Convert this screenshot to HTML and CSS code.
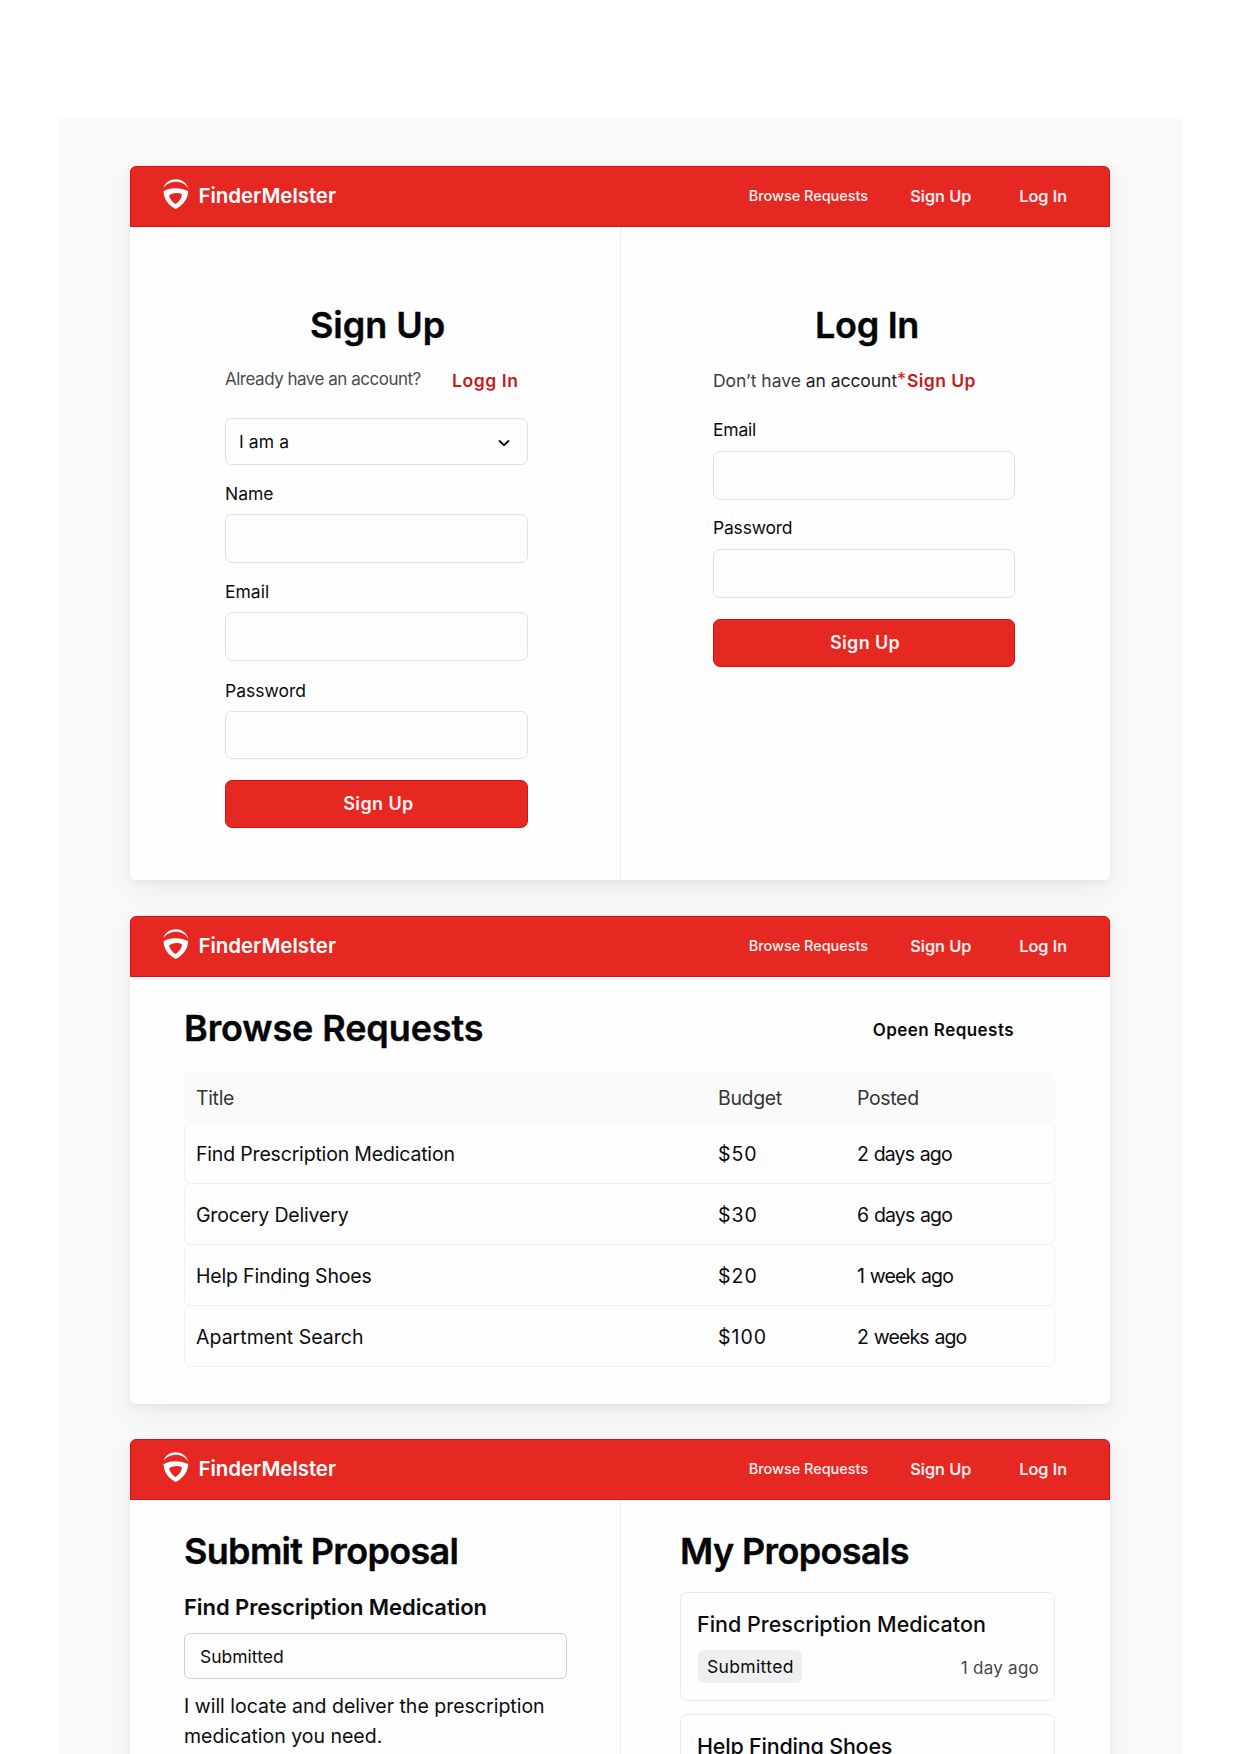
FILE: index.html
```html
<!DOCTYPE html>
<html lang="en">
<head>
<meta charset="utf-8">
<title>FinderMelster</title>
<link rel="stylesheet" href="styles.css">
</head>
<body>
<svg width="0" height="0" class="defs" aria-hidden="true">
  <symbol id="logo" viewBox="0 0 26 31">
    <path d="M.3 9.300C4-2.800 22-2.800 25.400 9.900C20.500.6 6 .3 .3 9.300Z" fill="currentColor"/>
    <path fill-rule="evenodd" d="M.5 12.300C7 7.800 18 8.600 25.200 12C25 19.500 20.500 26 12.700 30C5.500 26.500 1 20.500 .5 12.300ZM6 16.500C7.200 20.500 9.500 23.300 12.300 25C16 23 18.700 19.500 19 15.300C15 13.300 10 13.800 6 16.500Z" fill="currentColor"/>
  </symbol>
</svg>
<main class="canvas">
  <section class="card card-auth">
    <header class="bar">
      <div class="brand"><svg class="logo"><use href="#logo"/></svg><span class="brand-name">FinderMelster</span></div>
      <nav class="nav"><a class="nav-browse">Browse Requests</a><a class="nav-signup">Sign Up</a><a class="nav-login">Log In</a></nav>
    </header>
    <div class="split">
      <div class="pane pane-signup">
        <h1 class="title title-signup">Sign Up</h1>
        <p class="switch"><span class="muted">Already have an account?</span><a class="link link-login">Logg In</a></p>
        <div class="select"><span>I am a</span><svg class="chevron" viewBox="0 0 12 8"><path d="M1 1.500L6 6.300L11 1.500" fill="none" stroke="currentColor" stroke-width="1.900"/></svg></div>
        <div class="field"><label>Name</label><div class="input"></div></div>
        <div class="field"><label>Email</label><div class="input"></div></div>
        <div class="field"><label>Password</label><div class="input"></div></div>
        <button class="btn">Sign Up</button>
      </div>
      <div class="pane pane-login">
        <h1 class="title title-login">Log In</h1>
        <p class="switch"><span class="ask"><span class="ask-soft">Don’t have</span> an account</span><span class="star">*</span><a class="link">Sign Up</a></p>
        <div class="field"><label>Email</label><div class="input"></div></div>
        <div class="field"><label>Password</label><div class="input"></div></div>
        <button class="btn">Sign Up</button>
      </div>
    </div>
  </section>

  <section class="card card-browse">
    <header class="bar">
      <div class="brand"><svg class="logo"><use href="#logo"/></svg><span class="brand-name">FinderMelster</span></div>
      <nav class="nav"><a class="nav-browse">Browse Requests</a><a class="nav-signup">Sign Up</a><a class="nav-login">Log In</a></nav>
    </header>
    <div class="browse-head"><h1 class="title title-browse">Browse Requests</h1><span class="open">Opeen Requests</span></div>
    <div class="table">
      <div class="row row-head"><span>Title</span><span>Budget</span><span>Posted</span></div>
      <div class="row row-first"><span>Find Prescription Medication</span><span class="money">$50</span><span class="ago">2 days ago</span></div>
      <div class="row"><span>Grocery Delivery</span><span class="money">$30</span><span class="ago">6 days ago</span></div>
      <div class="row"><span>Help Finding Shoes</span><span class="money">$20</span><span class="ago">1 week ago</span></div>
      <div class="row"><span class="wide">Apartment Search</span><span class="money">$100</span><span class="ago">2 weeks ago</span></div>
    </div>
  </section>

  <section class="card card-proposals">
    <header class="bar">
      <div class="brand"><svg class="logo"><use href="#logo"/></svg><span class="brand-name">FinderMelster</span></div>
      <nav class="nav"><a class="nav-browse">Browse Requests</a><a class="nav-signup">Sign Up</a><a class="nav-login">Log In</a></nav>
    </header>
    <div class="split">
      <div class="pane pane-submit">
        <h1 class="title title-submit">Submit Proposal</h1>
        <h2 class="subtitle">Find Prescription Medication</h2>
        <div class="status">Submitted</div>
        <p class="message">I will locate and deliver the prescription<br>medication you need.</p>
      </div>
      <div class="pane pane-mine">
        <h1 class="title title-mine">My Proposals</h1>
        <article class="proposal"><h3>Find Prescription Medicaton</h3><div class="meta"><span class="badge">Submitted</span><time>1 day ago</time></div></article>
        <article class="proposal"><h3 class="tight">Help Finding Shoes</h3></article>
      </div>
    </div>
  </section>
</main>
</body>
</html>
```
FILE: styles.css
```css
* { box-sizing: border-box; margin: 0; }
html, body { height: 1754px; overflow: hidden; }
body { background: #fff; color: #0b0c0d; font-family: Inter, "Liberation Sans", sans-serif; }
.defs { position: absolute; }

.canvas {
  width: 1123px; height: 1636px; margin: 118px 0 0 59px; padding: 48px 71px 0;
  background: #f9f9f9; overflow: hidden; display: flex; flex-direction: column;
}
.card {
  flex: none; width: 980px; background: #fefefe; border-radius: 6px;
  box-shadow: 0 10px 30px rgba(0, 0, 0, .05), 0 3px 8px rgba(0, 0, 0, .05);
}
.card-auth { height: 714px; margin-bottom: 36px; }
.card-browse { height: 488px; margin-bottom: 35px; }
.card-proposals { height: 520px; }

.bar {
  height: 61px; padding: 0 42px 0 32px; display: flex; justify-content: space-between; align-items: center;
  background: #e62822; border: 1px solid #d4130f; border-radius: 6px 6px 0 0; color: #fff;
}
.brand { display: flex; align-items: center; gap: 9.500px; }
.logo { width: 26px; height: 31px; margin-top: -4px; }
.brand-name { font-size: 20.500px; font-weight: 600; line-height: 24px; margin-top: -2px; letter-spacing: -.06px; }
.nav { display: flex; align-items: center; margin-top: -2px; }
.nav a { line-height: 20px; font-weight: 500; color: #fff1f0; -webkit-text-stroke: .2px; }
.nav .nav-browse { width: 161.500px; font-size: 14.500px; letter-spacing: -.05px; -webkit-text-stroke: 0; }
.nav .nav-signup { width: 109px; font-size: 16.300px; }
.nav .nav-login { font-size: 16.300px; }

.split { display: grid; grid-template-columns: 491px 1fr; }
.card-auth .split { height: 653px; }
.card-proposals .split { height: 459px; }
.split > .pane:first-child { background: linear-gradient(#e9eaea, #e9eaea) right / 1px 100% no-repeat; }
.title { font-size: 36px; line-height: 44px; font-weight: 600; color: #050607; white-space: nowrap; -webkit-text-stroke: .4px; }

.pane-signup { padding: 76px 93px 0 95px; }
.pane-login { padding: 76px 95px 0 92px; }
.title-signup { padding-left: 85px; letter-spacing: -.05px; }
.title-login { padding-left: 102px; letter-spacing: -.3px; }
.switch { height: 24px; margin-top: 20px; display: flex; font-size: 17.500px; line-height: 24px; white-space: nowrap; }
.muted { width: 227px; color: #4a4b4d; font-size: 17px; letter-spacing: -.49px; }
.link { color: #c5191b; font-weight: 600; padding-top: 2px; letter-spacing: .6px; }
.pane-login .link { letter-spacing: .45px; }
.ask { padding-top: 2px; width: 184px; color: #1b1c1e; letter-spacing: -.04px; }
.ask-soft { color: #3c3d3f; }
.star { width: 10px; color: #d02a2a; font-weight: 500; }

.select {
  width: 303px; height: 47px; margin: 27px 0 17px; padding: 0 17px 0 13px;
  display: flex; align-items: center; justify-content: space-between;
  border: 1px solid #dfe0e1; border-radius: 7px; font-size: 17.500px; letter-spacing: .1px;
}
.chevron { width: 12px; height: 8px; margin-top: 3px; }
.field { height: 81px; margin-bottom: 17.300px; }
.field label { display: inline-block; height: 24px; line-height: 24px; font-size: 17.500px; }
.input { width: 303px; height: 48.500px; margin-top: 8px; border: 1px solid #dfe1e2; border-radius: 7px; }
.pane-login .switch { margin-bottom: 27px; }
.pane-login .field { letter-spacing: -.2px; }
.pane-login .input { width: 302px; margin-top: 9px; }
.btn {
  display: block; width: 303px; height: 48px; margin-top: 20px; padding: 0 0 0 4px; border: 1px solid #d4130f; border-radius: 7px;
  background: #e62822; color: #fff4f3; font: 600 18px/44px Inter, sans-serif; letter-spacing: .4px;
}
.pane-login .btn { width: 302px; margin-top: 21.500px; padding-left: 2px; letter-spacing: .35px; }

.browse-head { display: flex; justify-content: space-between; padding: 29px 96px 0 54px; height: 95px; }
.title-browse { letter-spacing: -.1px; }
.open { font-size: 17px; font-weight: 600; line-height: 24px; padding-top: 12px; letter-spacing: .45px; }
.table { width: 871px; margin-left: 54px; font-size: 19.500px; letter-spacing: -.18px; }
.row {
  height: 62px; margin-bottom: -1px; padding: 1px 0 0 11px; display: grid; grid-template-columns: 522px 139px 1fr; align-items: center;
  border: 1px solid #f0f1f1; border-radius: 6px;
}
.row-head { height: 51px; background: #fafafa; border-color: #fafafa; color: #343537; padding: 0 0 0 11px; letter-spacing: -.35px; }
.row-first { border-top-color: transparent; }
.wide { letter-spacing: .03px; }
.money { letter-spacing: 1px; }
.ago { letter-spacing: -.85px; word-spacing: 1px; }

.pane-submit { padding: 29px 0 0 54px; }
.title-submit { letter-spacing: -.68px; }
.subtitle { font-size: 22px; font-weight: 600; line-height: 28px; margin-top: 20px; letter-spacing: -.07px; }
.status { width: 383px; height: 46px; margin-top: 12px; padding-left: 15px; border: 1px solid #cfd0d1; border-radius: 6px; font-size: 17.500px; line-height: 45px; }
.message { margin-top: 13px; font-size: 19.500px; line-height: 29.500px; white-space: nowrap; }
.pane-mine { padding: 29px 0 0 59px; }
.title-mine { margin-bottom: 19px; letter-spacing: -.62px; }
.proposal { width: 375px; height: 109px; padding: 17px 15px 0 16px; border: 1px solid #e8e9e9; border-radius: 7px; margin-bottom: 13px; }
.proposal h3 { font-size: 21.500px; line-height: 28px; font-weight: 500; white-space: nowrap; }
.proposal .tight { letter-spacing: -.2px; }
.meta { display: flex; justify-content: space-between; margin: 12px 0 0 1px; }
.badge { width: 104px; height: 33px; padding-left: 9px; border-radius: 6px; background: #eeefef; font-size: 17.500px; line-height: 33px; letter-spacing: .35px; }
.meta time { font-size: 17px; line-height: 37px; color: #45474b; letter-spacing: .25px; }
```
